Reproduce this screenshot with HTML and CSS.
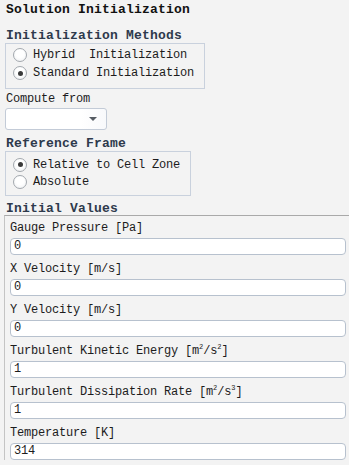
FILE: index.html
```html
<!DOCTYPE html>
<html>
<head>
<meta charset="utf-8">
<link rel="stylesheet" href="styles.css">
</head>
<body>
<div class="panel">
  <div class="title">Solution Initialization</div>

  <div class="group-title gt-methods">Initialization Methods</div>
  <div class="box box-methods">
    <label class="radio-row"><span class="radio"></span><span>Hybrid&nbsp;&nbsp;Initialization</span></label>
    <label class="radio-row"><span class="radio checked"></span><span>Standard Initialization</span></label>
  </div>

  <div class="label compute">Compute from</div>
  <div class="select"><span class="caret"></span></div>

  <div class="group-title gt-frame">Reference Frame</div>
  <div class="box box-frame">
    <label class="radio-row"><span class="radio checked"></span><span>Relative to Cell Zone</span></label>
    <label class="radio-row"><span class="radio"></span><span>Absolute</span></label>
  </div>

  <div class="group-title gt-values">Initial Values</div>
  <div class="values">
    <div class="field">
      <div class="field-label">Gauge Pressure [Pa]</div>
      <div class="input">0</div>
    </div>
    <div class="field">
      <div class="field-label">X Velocity [m/s]</div>
      <div class="input">0</div>
    </div>
    <div class="field">
      <div class="field-label">Y Velocity [m/s]</div>
      <div class="input">0</div>
    </div>
    <div class="field">
      <div class="field-label">Turbulent Kinetic Energy [m<sup>2</sup>/s<sup>2</sup>]</div>
      <div class="input">1</div>
    </div>
    <div class="field">
      <div class="field-label">Turbulent Dissipation Rate [m<sup>2</sup>/s<sup>3</sup>]</div>
      <div class="input">1</div>
    </div>
    <div class="field">
      <div class="field-label">Temperature [K]</div>
      <div class="input">314</div>
    </div>
  </div>
</div>
</body>
</html>
```

FILE: styles.css
```css
html, body {
  margin: 0;
  padding: 0;
  background: #f3f3f3;
}
body {
  width: 349px;
  height: 465px;
  overflow: hidden;
  font-family: "Liberation Mono", "DejaVu Sans Mono", monospace;
  font-size: 12px;
  letter-spacing: -0.2px;
  color: #1c1c1c;
}
.panel {
  display: flex;
  flex-direction: column;
}
.title {
  font-weight: bold;
  font-size: 13px;
  letter-spacing: 0.2px;
  line-height: 16px;
  padding-top: 2px;
  height: 16px;
  margin-left: 6px;
  color: #111;
}
.group-title {
  font-weight: bold;
  font-size: 13px;
  letter-spacing: 0.2px;
  margin-left: 6px;
  color: #2e3a4c;
}
.gt-methods {
  margin-top: 10px;
  line-height: 15px;
  height: 15px;
}
.gt-frame {
  margin-top: 7px;
  line-height: 14px;
  height: 14px;
}
.gt-values {
  margin-top: 7px;
  line-height: 12px;
  height: 12px;
}
.box {
  margin-left: 5px;
  border: 1px solid #c9d1dd;
  display: flex;
  flex-direction: column;
}
.box-methods {
  width: 198px;
  height: 42px;
  padding-top: 2px;
  box-sizing: content-box;
}
.box-methods .radio-row {
  height: 18px;
}
.box-frame {
  width: 184px;
  height: 43px;
}
.box-frame .radio-row {
  height: 17px;
}
.box-frame .radio-row:first-child {
  margin-top: 4px;
}
.radio-row {
  display: flex;
  align-items: center;
  gap: 6px;
  padding-left: 7px;
  line-height: 16px;
}
.radio {
  width: 12px;
  height: 12px;
  border: 1px solid #a3a8ae;
  border-radius: 50%;
  background: radial-gradient(circle at 50% 40%, #ffffff 40%, #eceef0 100%);
  position: relative;
  flex: none;
}
.radio.checked::after {
  content: "";
  position: absolute;
  left: 3.5px;
  top: 3.5px;
  width: 5px;
  height: 5px;
  border-radius: 50%;
  background: #3a3a3a;
}
.label.compute {
  margin-top: 2px;
  margin-left: 6px;
  line-height: 16px;
  height: 16px;
}
.select {
  margin-top: 1px;
  margin-left: 5px;
  height: 20px;
  border: 1px solid #c3cbd7;
  border-radius: 3px;
  background: linear-gradient(to right, #ffffff 75%, #f8f9fb 100%);
  display: flex;
  align-items: center;
  justify-content: flex-end;
  padding-right: 9px;
  box-sizing: content-box;
  width: 91px;
}
.caret {
  width: 0;
  height: 0;
  border-left: 4px solid transparent;
  border-right: 4px solid transparent;
  border-top: 4px solid #555b63;
}
.values {
  margin-left: 4px;
  border-top: 1px solid #a9a9a9;
  border-left: 1px solid #c4c4c4;
  padding-left: 5px;
  padding-right: 3px;
  display: flex;
  flex-direction: column;
  gap: 2px;
}
.field {
  display: flex;
  flex-direction: column;
}
.field-label {
  height: 22px;
  box-sizing: border-box;
  padding-top: 3px;
  line-height: 19px;
  white-space: nowrap;
}
.field-label sup {
  font-size: 7px;
  vertical-align: 5px;
  line-height: 0;
  letter-spacing: 0;
}
.input {
  height: 17px;
  box-sizing: border-box;
  border: 1px solid #b7c1ce;
  border-radius: 4px;
  background: #fff;
  padding-left: 3px;
  line-height: 15px;
}
```
